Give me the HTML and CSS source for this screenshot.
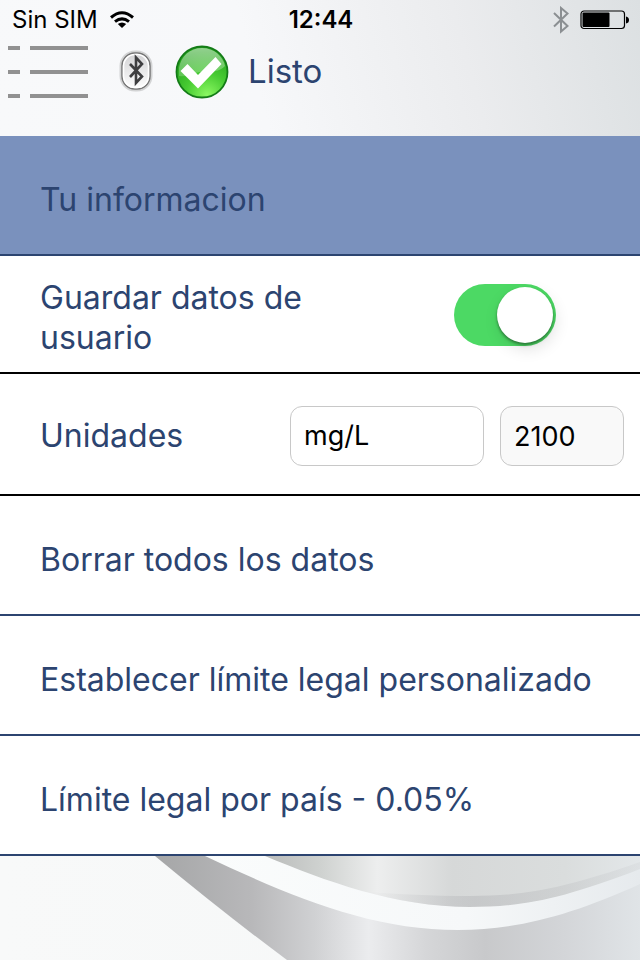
FILE: index.html
```html
<!DOCTYPE html>
<html lang="es">
<head>
    <meta charset="UTF-8">
    <meta name="viewport" content="width=device-width, initial-scale=1.0">
    <title>Listo</title>
    <link rel="stylesheet" href="styles.css">
</head>
<body>
    <div class="statusBar">
        <div class="carrier">
            <span>Sin SIM</span>
            <svg width="26" height="20" viewBox="0 0 26 20" fill="none" stroke="#000" stroke-width="3">
                <path d="M2 7.5Q13-2 24 7.5"/>
                <path d="M6 11.7Q13 6 20 11.7"/>
                <path d="M13 18L8.8 14.1Q13 11 17.2 14.1Z" fill="#000" stroke="none"/>
            </svg>
        </div>
        <time class="clock">12:44</time>
        <div class="indicators">
            <svg width="16" height="28" viewBox="0 0 16 28" fill="none" stroke="#8b8f92" stroke-width="2">
                <path d="M1 7L14.5 20L8 25.5V2L14.5 7.500L1 20.500"/>
            </svg>
            <svg width="50" height="20" viewBox="0 0 50 20">
                <rect x="1" y="1" width="43.500" height="17.500" rx="3" fill="none" stroke="#000" stroke-width="1.200"/>
                <rect x="2.500" y="2.500" width="27" height="14.500" rx="1" fill="#000"/>
                <path d="M46 6.500Q49 7 49 10T46 13.500Z" fill="#000"/>
            </svg>
        </div>
    </div>

    <header class="topBar">
        <button class="menuButton" aria-label="Menu">
            <svg width="80" height="54" viewBox="0 0 80 54" stroke="#919191" stroke-width="4">
                <path d="M0 3H12M22 3H80M0 27H12M22 27H80M0 51H12M22 51H80"/>
            </svg>
        </button>
        <svg class="deviceIcon" width="36" height="44" viewBox="0 0 36 44">
            <defs>
                <linearGradient id="badge" x1="0" y1="0" x2="0" y2="1">
                    <stop offset="0" stop-color="#d2d2d4"/>
                    <stop offset="1" stop-color="#ffffff"/>
                </linearGradient>
            </defs>
            <rect x="3" y="3" width="30" height="38" rx="14" fill="none" stroke="#000" stroke-opacity="0.15" stroke-width="3"/>
            <rect x="4" y="4" width="28" height="36" rx="13" fill="url(#badge)" stroke="#777" stroke-width="1.500"/>
            <rect x="5.500" y="5.500" width="25" height="33" rx="11.500" fill="none" stroke="#fff" stroke-width="1.500"/>
            <path d="M12 15L24 27.500L18 34V8.500L24 15L12 28" fill="none" stroke="#3e3e40" stroke-width="2.600"/>
        </svg>
        <svg class="readyIcon" width="54" height="54" viewBox="0 0 54 54">
            <defs>
                <radialGradient id="ball" cx="0.6" cy="0.95" r="0.85">
                    <stop offset="0" stop-color="#8bf862"/>
                    <stop offset="0.5" stop-color="#47cb32"/>
                    <stop offset="1" stop-color="#27a41f"/>
                </radialGradient>
                <linearGradient id="gloss" x1="0" y1="0" x2="0" y2="1">
                    <stop offset="0" stop-color="#fff" stop-opacity="0.5"/>
                    <stop offset="1" stop-color="#fff" stop-opacity="0.2"/>
                </linearGradient>
            </defs>
            <circle cx="27" cy="27" r="25.500" fill="url(#ball)" stroke="#147c17" stroke-width="1.800"/>
            <path d="M4 23C6 11 15 3 27 3C39 3 48 11 50 21C40 31 28 23 16 30Q8 32 4 31Z" fill="url(#gloss)"/>
            <path d="M5.500 26L12.500 19L23 30L40.500 12L46.500 19L23 43.500Z" fill="#fff"/>
        </svg>
        <h1 class="title">Listo</h1>
    </header>

    <main class="settings">
        <button class="row selected">Tu informacion</button>
        <div class="row switchRow">
            <label for="saveData">Guardar datos de usuario</label>
            <input type="checkbox" role="switch" class="switch" id="saveData" checked>
        </div>
        <div class="row unitsRow">
            <label for="units">Unidades</label>
            <select class="field" id="units">
                <option>mg/L</option>
                <option>%</option>
            </select>
            <input type="text" class="field factor" value="2100" aria-label="Factor" readonly>
        </div>
        <button class="row">Borrar todos los datos</button>
        <button class="row">Establecer límite legal personalizado</button>
        <button class="row">Límite legal por país - 0.05%</button>
    </main>

    <svg class="waves" viewBox="0 0 640 104" preserveAspectRatio="none" aria-hidden="true">
        <defs>
            <linearGradient id="left" x1="0" y1="0" x2="1" y2="0">
                <stop offset="0" stop-color="#f8f9f9"/>
                <stop offset="1" stop-color="#f5f7f7"/>
            </linearGradient>
            <linearGradient id="lower" gradientUnits="userSpaceOnUse" x1="155" y1="0" x2="640" y2="0">
                <stop offset="0" stop-color="#a5a6a7"/>
                <stop offset="0.200" stop-color="#b8b8ba"/>
                <stop offset="0.330" stop-color="#d0d1d3"/>
                <stop offset="0.440" stop-color="#ebecee"/>
                <stop offset="0.560" stop-color="#d5d6d8"/>
                <stop offset="0.680" stop-color="#c8c9cb"/>
                <stop offset="0.840" stop-color="#d3d5d8"/>
                <stop offset="1" stop-color="#e0e4e7"/>
            </linearGradient>
            <linearGradient id="upper" gradientUnits="userSpaceOnUse" x1="265" y1="0" x2="640" y2="0">
                <stop offset="0" stop-color="#b9bbba"/>
                <stop offset="0.150" stop-color="#cfd2d0"/>
                <stop offset="0.300" stop-color="#edeeee"/>
                <stop offset="0.500" stop-color="#d6d8d8"/>
                <stop offset="0.800" stop-color="#dadddd"/>
                <stop offset="1" stop-color="#e3e7e9"/>
            </linearGradient>
            <linearGradient id="shade" x1="0" y1="0" x2="1" y2="0">
                <stop offset="0" stop-color="#a8a9ad" stop-opacity="0"/>
                <stop offset="0.400" stop-color="#a8a9ad" stop-opacity="0.350"/>
                <stop offset="1" stop-color="#a8a9ad" stop-opacity="0.100"/>
            </linearGradient>
            <linearGradient id="band" gradientUnits="userSpaceOnUse" x1="205" y1="0" x2="640" y2="0">
                <stop offset="0" stop-color="#fafcfc"/>
                <stop offset="0.600" stop-color="#f6f8f9"/>
                <stop offset="1" stop-color="#e6eaed"/>
            </linearGradient>
        </defs>
        <rect width="640" height="104" fill="url(#left)"/>
        <path d="M155 0H640V104H287Q225 58 155 0Z" fill="url(#lower)"/>
        <path d="M265 0H640V15C560 44 520 51 470 51C395 51 325 25 265 0Z" fill="url(#upper)"/>
        <path d="M365 36C400 38 430 40 470 40C520 40 560 34 640 6V15C560 44 520 51 470 51C430 51 400 46 365 36Z" fill="url(#shade)"/>
        <path d="M205 0H265C325 25 395 51 470 51C520 51 560 44 640 13V28C570 60 515 74 458 74C370 74 290 40 205 0Z" fill="url(#band)"/>
    </svg>
</body>
</html>
```
FILE: styles.css
```css
* {
    box-sizing: border-box;
}
body {
    display: flex;
    flex-direction: column;
    min-height: 100vh;
    margin: 0;
    font-family: Inter, 'Liberation Sans', sans-serif;
    font-size: 32px;
    line-height: 40px;
    color: #2c4470;
    background: linear-gradient(75deg, #f8f9fa 0, #f7f8fa 40%, #ebecee 72%, #dce0e2 100%) 0 0 / 100% 136px no-repeat #f8f9f9;
}
button,
select,
input {
    margin: 0;
    font: inherit;
    color: inherit;
}
.statusBar {
    display: grid;
    grid-template-columns: 1fr auto 1fr;
    align-items: center;
    height: 40px;
    padding: 0 10px 0 12px;
    font-size: 24px;
    color: #000;
}
.carrier,
.indicators {
    display: flex;
    align-items: center;
    gap: 11px;
}
.indicators {
    justify-content: flex-end;
}
.clock {
    font-weight: 600;
}
.topBar {
    display: flex;
    align-items: flex-start;
    height: 96px;
    padding: 5px 8px;
}
.menuButton {
    display: flex;
    padding: 0;
    border: none;
    background: none;
    cursor: pointer;
}
.deviceIcon {
    margin: 4px 21px 0 30px;
}
.title {
    margin: 6px 0 0 19px;
    font-size: 33px;
    font-weight: 400;
}
.settings {
    display: flex;
    flex-direction: column;
}
.row {
    padding: 44px 40px 34px;
    border: none;
    border-bottom: 2px solid #2c4470;
    background: #fff;
    text-align: left;
}
.selected {
    background: #7a91bd;
}
.switchRow,
.unitsRow {
    display: flex;
    align-items: center;
    border-color: #000;
}
.switchRow {
    align-items: flex-start;
    justify-content: space-between;
    gap: 60px;
    padding: 22px 84px 14px 40px;
}
.switchRow label {
    max-width: 320px;
}
.switch {
    flex: none;
    display: flex;
    justify-content: flex-end;
    width: 102px;
    height: 62px;
    margin-top: 6px;
    padding: 3px;
    border-radius: 31px;
    background: #4cd964;
    appearance: none;
    cursor: pointer;
}
.switch::before {
    content: '';
    width: 56px;
    height: 56px;
    border-radius: 50%;
    background: #fff;
    box-shadow: 0 2px 3px rgba(0, 0, 0, 0.4), 2px 6px 16px rgba(0, 0, 0, 0.12);
}
.switch:not(:checked) {
    justify-content: flex-start;
    background: #ddd;
}
.unitsRow {
    gap: 16px;
    padding: 32px 16px 28px 40px;
}
.unitsRow label {
    flex: 1;
}
.field {
    width: 194px;
    height: 60px;
    padding: 0 13px;
    border: 1px solid #c8c8c8;
    border-radius: 12px;
    background: #fff;
    font-size: 27px;
    color: #000;
    appearance: none;
}
.factor {
    width: 124px;
    background: #f9f9f9;
}
.waves {
    display: block;
    flex: 1;
    width: 100%;
    min-height: 104px;
}
@media (max-width: 639px) {
    .row {
        padding-left: 20px;
        padding-right: 16px;
    }
    .unitsRow {
        flex-wrap: wrap;
    }
}
```
